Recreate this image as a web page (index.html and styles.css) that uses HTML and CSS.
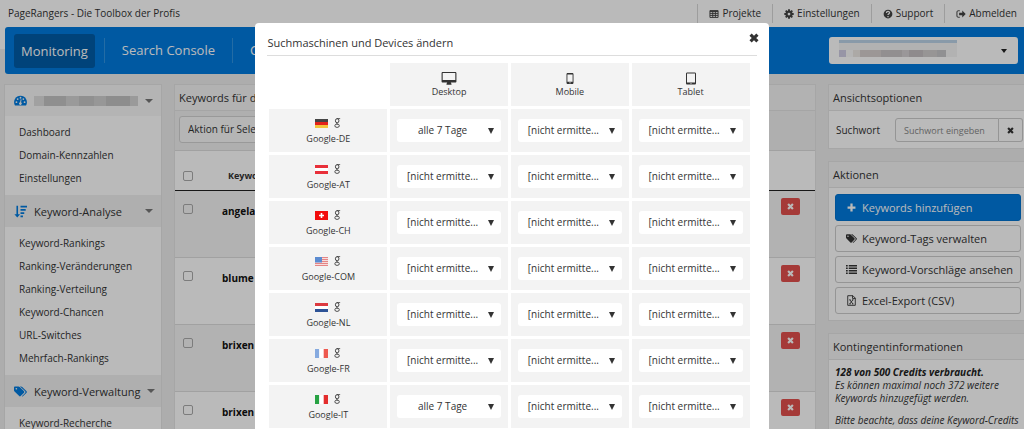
FILE: index.html
```html
<!DOCTYPE html>
<html lang="de">
<head>
<meta charset="utf-8">
<meta name="viewport" content="width=device-width, initial-scale=1">
<title>PageRangers - Die Toolbox der Profis</title>
<link rel="stylesheet" href="styles.css">
</head>
<body>
<svg class="sprite" aria-hidden="true">
  <symbol id="i-table" viewBox="0 0 16 16"><path fill="none" stroke="currentColor" stroke-width="1.500" d="M1.500 2.500h13v11h-13zM1.500 4h13M1.500 7h13M1.500 10.200h13M6 3v10M10.200 3v10"/></symbol>
  <symbol id="i-cog" viewBox="0 0 16 16"><circle cx="8" cy="8" r="4" fill="none" stroke="currentColor" stroke-width="3.600"/><path stroke="currentColor" stroke-width="3" d="M8 .5v3M8 12.500v3M.5 8h3M12.500 8h3M2.700 2.700l2 2M11.300 11.300l2 2M2.700 13.300l2-2M11.300 4.700l2-2"/></symbol>
  <symbol id="i-help" viewBox="0 0 16 16"><circle cx="8" cy="8" r="7" fill="currentColor"/><path fill="none" stroke="#fff" stroke-width="2" d="M5.500 6.300c0-3.300 5-3.300 5-.3 0 1.800-2.500 1.800-2.500 3.600M8 11v2"/></symbol>
  <symbol id="i-out" viewBox="0 0 16 16"><path fill="none" stroke="currentColor" stroke-width="1.600" d="M6 2.800H3.500a2 2 0 0 0-2 2v6.400a2 2 0 0 0 2 2H6"/><path fill="currentColor" d="M5 6h5V2.500L15.500 8 10 13.500V10H5z"/></symbol>
  <symbol id="i-dash" viewBox="0 0 16 16"><path fill="currentColor" d="M8 2a8 8 0 0 0-6.800 12h13.600A8 8 0 0 0 8 2z"/><g fill="#f6f6f6"><circle cx="3" cy="10" r="1.100"/><circle cx="4.500" cy="6.300" r="1.100"/><circle cx="8" cy="4.600" r="1.100"/><circle cx="11.500" cy="6.300" r="1.100"/><circle cx="13" cy="10" r="1.100"/><path d="M8.300 6.500l1 .3-.6 3.400a1.700 1.700 0 1 1-1.200-.2z"/></g></symbol>
  <symbol id="i-sort" viewBox="0 0 16 16"><path fill="currentColor" d="M3 1h2v10.500h2.500L4 15.500.5 11.500H3zM8 1h8v2.200H8zM8 5h6.400v2.200H8zM8 9h4.600v2.200H8zM8 13h3v2.200H8z"/></symbol>
  <symbol id="i-tags" viewBox="0 0 18 16"><path fill="currentColor" fill-rule="evenodd" d="M0 2.500C0 1.600.6 1 1.500 1h4.700c.6 0 1.200.3 1.700.7l6 6c.6.6.6 1.400 0 2l-4.700 4.700c-.6.6-1.400.6-2 0l-6.400-6.300C.3 7.600 0 7 0 6.300zM3.200 3a1.200 1.200 0 1 0 .1 2.400A1.200 1.200 0 0 0 3.200 3z"/><path fill="currentColor" d="M8.200 1h1.500c.6 0 1.200.3 1.700.7l6 6c.6.6.6 1.400 0 2l-4.700 4.700c-.6.6-1.200.6-1.800.2l4.200-4.300c1-1 1-2.200.1-3.100z"/></symbol>
  <symbol id="i-x" viewBox="0 0 16 16"><path stroke="currentColor" stroke-width="5" d="M2.500 2.500l11 11M13.500 2.500l-11 11"/></symbol>
  <symbol id="i-plus" viewBox="0 0 16 16"><path stroke="currentColor" stroke-width="4" d="M8 1v14M1 8h14"/></symbol>
  <symbol id="i-list" viewBox="0 0 16 16"><path stroke="currentColor" stroke-width="2.200" d="M0 2.500h2.500M0 6.200h2.500M0 9.900h2.500M0 13.600h2.500M4 2.500h12M4 6.200h12M4 9.900h12M4 13.600h12"/></symbol>
  <symbol id="i-excel" viewBox="0 0 16 16"><path fill="none" stroke="currentColor" stroke-width="1.300" d="M2.500 1h7.500l3.500 3.500V15h-11zM9.500 1v4h4M5.500 7l4.500 6M10 7l-4.500 6M4.800 7h2M8.800 7h2M4.800 13h2M8.800 13h2"/></symbol>
  <symbol id="i-desktop" viewBox="0 0 16 14"><path fill="currentColor" fill-rule="evenodd" d="M1.200 0h13.600c.7 0 1.200.5 1.200 1.200v9c0 .7-.5 1.200-1.200 1.200H10c0 .7.7 1.200.7 1.800v.5H5.300v-.5c0-.6.7-1.100.7-1.800H1.200C.5 11.400 0 10.900 0 10.200v-9C0 .5.500 0 1.200 0zM1.200 1.200v7.300h13.600V1.200z"/></symbol>
  <symbol id="i-mobile" viewBox="0 0 8 12"><path fill="currentColor" fill-rule="evenodd" d="M1.800.5h4.400c.7 0 1.300.5 1.300 1.300v8.400c0 .8-.6 1.300-1.300 1.300H1.800C1.100 11.500.5 11 .5 10.200V1.800C.5 1 1.100.5 1.800.5zM1.400 2v7.300h5.200V2zM3.300 10v.8h1.400V10z"/></symbol>
  <symbol id="i-tablet" viewBox="0 0 10 12"><path fill="currentColor" fill-rule="evenodd" d="M1.300 0h7.400C9.500 0 10 .6 10 1.300v9.400c0 .7-.5 1.300-1.300 1.300H1.300C.5 12 0 11.400 0 10.700V1.300C0 .6.500 0 1.300 0zM1 1v9h8V1zM4.500 10.500v.8h1v-.8z"/></symbol>
  <symbol id="i-google" viewBox="0 0 8 12"><g fill="none" stroke="currentColor"><ellipse cx="3.600" cy="3.300" rx="2.100" ry="2.500" stroke-width="1.100"/><path stroke-width=".9" d="M3.200.7h4M3.800 5.800c-1 .8-.6 1.300.6 1.900"/><ellipse cx="3.500" cy="9.300" rx="2.700" ry="2" stroke-width="1"/></g></symbol>
  <symbol id="f-de" viewBox="0 0 13 9"><path fill="#444" d="M0 0h13v3H0z"/><path fill="#e2231a" d="M0 3h13v3H0z"/><path fill="#f3c53c" d="M0 6h13v3H0z"/></symbol>
  <symbol id="f-at" viewBox="0 0 13 9"><path fill="#e8303a" d="M0 0h13v9H0z"/><path fill="#fff" d="M0 3h13v3H0z"/></symbol>
  <symbol id="f-ch" viewBox="0 0 13 9"><path fill="#f20d0d" d="M0 0h13v9H0z"/><path fill="#fff" d="M5.700 2h1.600v1.700H9v1.600H7.300V7H5.700V5.300H4V3.700h1.700z"/></symbol>
  <symbol id="f-com" viewBox="0 0 13 9"><path fill="#f7dcdc" d="M0 0h13v9H0z"/><path stroke="#e48585" d="M0 .5h13M0 2.500h13M0 4.500h13M0 6.500h13M0 8.500h13"/><path fill="#5b8bd0" d="M0 0h7v5.500H0z"/></symbol>
  <symbol id="f-nl" viewBox="0 0 13 9"><path fill="#dc3a40" d="M0 0h13v3H0z"/><path fill="#fff" d="M0 3h13v3H0z"/><path fill="#2d5296" d="M0 6h13v3H0z"/></symbol>
  <symbol id="f-fr" viewBox="0 0 13 9"><path fill="#86aadf" d="M0 0h4.300v9H0z"/><path fill="#fff" d="M4.300 0h4.400v9H4.300z"/><path fill="#ee5a50" d="M8.700 0H13v9H8.700z"/></symbol>
  <symbol id="f-it" viewBox="0 0 13 9"><path fill="#27a243" d="M0 0h4.300v9H0z"/><path fill="#fff" d="M4.300 0h4.400v9H4.300z"/><path fill="#e32d2d" d="M8.700 0H13v9H8.700z"/></symbol>
</svg>

<header class="header">
  <div class="topbar">
    <span>PageRangers - Die Toolbox der Profis</span>
    <nav class="toplinks" aria-label="Konto">
      <a href="#"><svg class="icon-s"><use href="#i-table"/></svg>Projekte</a>
      <a href="#"><svg class="icon-s"><use href="#i-cog"/></svg>Einstellungen</a>
      <a href="#"><svg class="icon-s"><use href="#i-help"/></svg>Support</a>
      <a href="#"><svg class="icon-s"><use href="#i-out"/></svg>Abmelden</a>
    </nav>
  </div>
  <div class="mainbar">
    <nav class="mainnav" aria-label="Hauptmenü">
      <a class="active" href="#">Monitoring</a>
      <a href="#">Search Console</a>
      <a href="#">C</a>
    </nav>
    <div class="account">
      <select aria-label="Projekt"><option></option></select>
      <span class="redacted-account"></span>
    </div>
  </div>
</header>

<div class="page">
  <aside class="sidebar">
    <h2 class="menu-head first"><svg class="icon-m"><use href="#i-dash"/></svg><span class="redacted-name"></span><i class="caret"></i></h2>
    <ul class="menu">
      <li><a href="#">Dashboard</a></li>
      <li><a href="#">Domain-Kennzahlen</a></li>
      <li><a href="#">Einstellungen</a></li>
    </ul>
    <h2 class="menu-head"><svg class="icon-m"><use href="#i-sort"/></svg><span>Keyword-Analyse</span><i class="caret"></i></h2>
    <ul class="menu">
      <li><a href="#">Keyword-Rankings</a></li>
      <li><a href="#">Ranking-Veränderungen</a></li>
      <li><a href="#">Ranking-Verteilung</a></li>
      <li><a href="#">Keyword-Chancen</a></li>
      <li><a href="#">URL-Switches</a></li>
      <li><a href="#">Mehrfach-Rankings</a></li>
    </ul>
    <h2 class="menu-head"><svg class="icon-m"><use href="#i-tags"/></svg><span>Keyword-Verwaltung</span><i class="caret"></i></h2>
    <ul class="menu">
      <li><a href="#">Keyword-Recherche</a></li>
    </ul>
  </aside>

  <main class="panel">
    <h2 class="panel-head">Keywords für d</h2>
    <div class="toolbar">
      <select aria-label="Aktion"><option>Aktion für Sele</option></select>
    </div>
    <table class="keywords">
      <thead>
        <tr><th class="check"><input type="checkbox" aria-label="Alle auswählen"></th><th class="word">Keyword</th><th class="del"></th></tr>
      </thead>
      <tbody>
        <tr><td class="check"><input type="checkbox" aria-label="angela auswählen"></td><td class="word">angela</td><td class="del"><button type="button" aria-label="Löschen"><svg><use href="#i-x"/></svg></button></td></tr>
        <tr><td class="check"><input type="checkbox" aria-label="blume auswählen"></td><td class="word">blume</td><td class="del"><button type="button" aria-label="Löschen"><svg><use href="#i-x"/></svg></button></td></tr>
        <tr><td class="check"><input type="checkbox" aria-label="brixen auswählen"></td><td class="word">brixen</td><td class="del"><button type="button" aria-label="Löschen"><svg><use href="#i-x"/></svg></button></td></tr>
        <tr><td class="check"><input type="checkbox" aria-label="brixen auswählen"></td><td class="word">brixen</td><td class="del"><button type="button" aria-label="Löschen"><svg><use href="#i-x"/></svg></button></td></tr>
      </tbody>
    </table>
  </main>

  <aside class="tools">
    <section class="panel">
      <h2 class="panel-head">Ansichtsoptionen</h2>
      <div class="search">
        <label for="suchwort">Suchwort</label>
        <input id="suchwort" type="text" placeholder="Suchwort eingeben">
        <button type="button" aria-label="Leeren"><svg><use href="#i-x"/></svg></button>
      </div>
    </section>
    <section class="panel">
      <h2 class="panel-head">Aktionen</h2>
      <div class="actions">
        <button class="primary" type="button"><svg><use href="#i-plus"/></svg>Keywords hinzufügen</button>
        <button type="button"><svg><use href="#i-tags"/></svg>Keyword-Tags verwalten</button>
        <button type="button"><svg><use href="#i-list"/></svg>Keyword-Vorschläge ansehen</button>
        <button type="button"><svg><use href="#i-excel"/></svg>Excel-Export (CSV)</button>
      </div>
    </section>
    <section class="panel">
      <h2 class="panel-head">Kontingentinformationen</h2>
      <div class="info">
        <p><strong>128 von 500 Credits verbraucht.</strong><br>Es können maximal noch 372 weitere Keywords hinzugefügt werden.</p>
        <p>Bitte beachte, dass deine Keyword-Credits</p>
      </div>
    </section>
  </aside>
</div>

<div class="overlay">
  <div class="modal" role="dialog" aria-modal="true" aria-labelledby="dialog-title">
    <div class="modal-head">
      <h1 id="dialog-title">Suchmaschinen und Devices ändern</h1>
      <button type="button" aria-label="Schließen"><svg><use href="#i-x"/></svg></button>
    </div>
    <table class="devices">
      <thead>
        <tr>
          <td></td>
          <th scope="col"><svg class="desktop"><use href="#i-desktop"/></svg>Desktop</th>
          <th scope="col"><svg class="mobile"><use href="#i-mobile"/></svg>Mobile</th>
          <th scope="col"><svg class="tablet"><use href="#i-tablet"/></svg>Tablet</th>
        </tr>
      </thead>
      <tbody id="engines"></tbody>
    </table>
  </div>
</div>
<script src="script.js"></script>
</body>
</html>
```

FILE: script.js
```js
const NONE = "[nicht ermitte...";
const WEEKLY = "alle 7 Tage";
const devices = ["Desktop", "Mobile", "Tablet"];
const engines = [
  ["DE", WEEKLY], ["AT", NONE], ["CH", NONE], ["COM", NONE],
  ["NL", NONE], ["FR", NONE], ["IT", WEEKLY]
];

function picker(engine, device, value) {
  const options = [NONE, WEEKLY]
    .map(o => `<option${o === value ? " selected" : ""}>${o}</option>`)
    .join("");
  return `<td><span class="picker"><select aria-label="Google-${engine} ${device}">${options}</select></span></td>`;
}

document.getElementById("engines").innerHTML = engines.map(([code, desktop]) => `
  <tr>
    <th scope="row">
      <span class="marks">
        <svg class="flag"><use href="#f-${code.toLowerCase()}"/></svg>
        <svg class="google"><use href="#i-google"/></svg>
      </span>
      Google-${code}
    </th>
    ${devices.map((d, i) => picker(code, d, i === 0 ? desktop : NONE)).join("")}
  </tr>`).join("");
```

FILE: styles.css
```css
* { box-sizing: border-box; }

body {
  margin: 0;
  height: 100vh;
  overflow: hidden;
  background: #ededed;
  color: #333;
  font: 10px/13px "Open Sans", "Noto Sans", sans-serif;
}

h1, h2, p, ul { margin: 0; padding: 0; font-weight: 400; }
ul { list-style: none; }
a { color: inherit; text-decoration: none; }
button, select, input { font: inherit; color: inherit; }
svg { display: block; flex: none; }
.sprite { position: absolute; width: 0; height: 0; }

/* Header */
.header {
  background: linear-gradient(#fff 49px, #ededed 49px);
  padding-left: 5px;
}
.topbar {
  display: flex;
  justify-content: space-between;
  align-items: center;
  height: 27px;
  padding-left: 3px;
}
.toplinks { display: flex; }
.toplinks a {
  display: flex;
  align-items: center;
  gap: 3px;
  height: 19px;
  padding: 0 11px;
  border-left: 1px solid #d8d8d8;
}
.toplinks a:last-child { padding-right: 7px; }
.icon-s { width: 10px; height: 10px; color: #444; }

.mainbar {
  display: flex;
  justify-content: space-between;
  align-items: center;
  height: 47px;
  padding: 0 6px 0 9px;
  background: #007bdf;
  border-radius: 3px 0 0 3px;
}
.mainnav {
  display: flex;
  align-items: center;
  color: #fff;
  font-size: 13px;
  font-weight: 500;
}
.mainnav a { padding: 0 17px; line-height: 25px; border-left: 1px solid #3194e2; }
.mainnav .active {
  margin-right: 9px;
  padding: 0 7px;
  line-height: 34px;
  border: 0;
  border-radius: 3px;
  background: #005ca8;
}
.account { position: relative; width: 189px; }
.account select {
  display: block;
  appearance: none;
  width: 100%;
  height: 27px;
  border: 0;
  border-radius: 3px;
  background: #fff;
}
.account::after {
  content: "";
  position: absolute;
  right: 11px;
  top: 12px;
  border: 3px solid transparent;
  border-top: 4px solid #222;
}
.redacted-account {
  position: absolute;
  left: 10px;
  top: 3px;
  width: 118px;
  height: 17px;
  border-top: 3px solid #bcd4e8;
  background:
    linear-gradient(#f4f4f4 7px, transparent 7px),
    linear-gradient(90deg, #cfcde4 7px, #f8f8f8 7px 14px, #ece8e4 14px 21px, #d6d0ce 21px 42px, #c8c4c6 42px 63px, #d4d0d2 63px 70px, #c4bfc2 70px 84px, #d0cccc 84px 98px, #c6c6c8 98px 107px, #f4f4f4 107px);
}

/* Columns */
.page {
  display: grid;
  grid-template-columns: 156px minmax(0, 1fr) 195px;
  gap: 14px;
  align-items: start;
  padding: 11px 0 0 5px;
}
.sidebar, .panel { background: #fff; box-shadow: 0 0 0 1px #e4e4e4; }

.menu-head {
  display: flex;
  align-items: center;
  gap: 7px;
  height: 32px;
  padding: 0 8px 0 9px;
  background: #f0f0f0;
  font-size: 11px;
  font-weight: 500;
  white-space: nowrap;
}
.menu-head.first { height: 31px; background: #f7f7f7; }
.icon-m { width: 13px; height: 13px; color: #007bdf; }
.caret {
  margin-left: auto;
  border: 4px solid transparent;
  border-top-color: #777;
  border-bottom: 0;
}
.redacted-name {
  width: 105px;
  height: 10px;
  background: linear-gradient(90deg, #ddd 10px, #c4c4c4 10px 32px, #d4d4d4 32px 45px, #c6c6c6 45px 60px, #d0d0d0 60px 72px, #c2c2c2 72px 96px, #d4d4d4 96px);
}
.menu { padding: 5px 14px; }
.menu li { line-height: 23px; }

.panel-head {
  height: 26px;
  padding-left: 4px;
  border-bottom: 1px solid #e2e2e2;
  background: #f5f5f5;
  font-size: 11px;
  line-height: 25px;
}

/* Keyword table */
.toolbar { padding: 5px 4px 7px; background: #f0f0f0; }
.toolbar select {
  display: block;
  appearance: none;
  width: 160px;
  height: 27px;
  padding: 0 8px;
  border: 1px solid #d2d2d2;
  border-radius: 3px;
  background: #f8f8f8;
}
.keywords { width: 100%; border-collapse: collapse; table-layout: fixed; }
.keywords th { height: 40px; padding: 0; border-top: 1px solid #ddd; border-bottom: 1px solid #222; font-size: 9px; text-align: left; vertical-align: middle; }
.keywords th.check, .keywords th.word { padding-top: 10px; }
.keywords th.word { padding-left: 6px; }
.keywords td { height: 67px; padding: 7px 0 0; border-bottom: 1px solid #ddd; vertical-align: top; }
.keywords tbody tr:nth-child(odd) { background: #f5f5f5; }
.keywords .check { width: 47px; }
.keywords td.check { padding-top: 13px; }
.keywords td.word { padding-top: 14px; color: #111; font-weight: 700; }
.keywords .del { width: 34px; }
.keywords input {
  display: block;
  appearance: none;
  width: 10px;
  height: 10px;
  margin: 0 0 0 8px;
  border: 1px solid #aaa;
  border-radius: 2px;
}
.keywords button {
  display: grid;
  place-items: center;
  width: 19px;
  height: 17px;
  padding: 0;
  border: 0;
  border-radius: 2px;
  background: #e3504d;
  color: #fff;
}
.keywords button svg { width: 7px; height: 7px; }

/* Right column */
.tools { display: grid; grid-template-columns: minmax(0, 1fr); gap: 14px; }
.search { display: flex; align-items: center; padding: 7px 1px 6px 7px; }
.search label { width: 59px; }
.search input {
  flex: 1;
  min-width: 0;
  height: 24px;
  padding: 0 8px;
  border: 1px solid #ccc;
  border-radius: 3px 0 0 3px;
  background: #fff;
  font-size: 9px;
}
.search input::placeholder { color: #888; opacity: 1; }
.search button {
  display: grid;
  place-items: center;
  width: 24px;
  height: 24px;
  padding: 0;
  border: 1px solid #ccc;
  border-left: 0;
  border-radius: 0 3px 3px 0;
  background: #fff;
}
.search button svg { width: 7px; height: 7px; }

.actions { display: grid; gap: 4px; padding: 6px 3px 6px 6px; }
.actions button {
  display: flex;
  align-items: center;
  gap: 5px;
  height: 27px;
  padding: 0 0 0 10px;
  border: 1px solid #ccc;
  border-radius: 3px;
  background: #fff;
  font-size: 11px;
  white-space: nowrap;
}
.actions svg { width: 11px; height: 11px; }
.actions .primary { border-color: #0072cf; background: #007bdf; color: #fff; font-weight: 500; }
.actions .primary svg { width: 11px; height: 9px; }

.info { padding: 6px 0 6px 6px; font-style: italic; }
.info p { margin-bottom: 9px; }
.info strong { color: #222; }

/* Dialog */
.overlay {
  position: fixed;
  inset: 0;
  overflow: hidden;
  padding-top: 23px;
  background: rgba(0, 0, 0, .27);
}
.modal {
  width: 50.1%;
  min-width: 480px;
  margin: 0 auto;
  padding: 0 12px 12px;
  border-radius: 4px;
  background: #fff;
}
.modal-head {
  display: flex;
  justify-content: space-between;
  align-items: center;
  height: 33px;
  border-bottom: 1px solid #ddd;
}
.modal-head h1 { padding-top: 6px; font-size: 11px; }
.modal-head button { margin: 0 -2px 3px 0; padding: 0; border: 0; background: none; }
.modal-head svg { width: 10px; height: 10px; }

.devices { width: 100%; margin-left: -1px; padding: 4px 3px 0 0; border-spacing: 3px; table-layout: fixed; border-collapse: separate; }
.devices th, .devices td { height: 43px; padding: 0 7px; vertical-align: middle; }
.devices th, .devices tbody td { background: #f3f3f3; }
.devices th { font-size: 9px; font-weight: 400; text-align: center; }
.devices tbody th { padding-top: 1px; }
.devices th svg { margin: 0 auto; height: 13px; }
.devices .desktop { width: 16px; }
.devices .mobile { width: 8px; height: 13px; }
.devices .tablet { width: 10px; }
.marks { display: flex; justify-content: center; align-items: center; gap: 6px; height: 12px; margin-bottom: 3px; }
.devices .marks svg { margin: 0; }
.devices .marks .flag { width: 13px; height: 9px; }
.devices .marks .google { width: 7px; height: 10px; }
.picker { display: block; position: relative; }
.picker select {
  display: block;
  appearance: none;
  width: 100%;
  height: 23px;
  padding: 0 18px 0 5px;
  border: 0;
  border-radius: 3px;
  background: #fff;
  text-align: center;
  text-align-last: center;
}
.picker::after {
  content: "";
  position: absolute;
  right: 7px;
  top: 9px;
  border: 3px solid transparent;
  border-top: 6px solid #333;
  border-bottom: 0;
  pointer-events: none;
}
```
